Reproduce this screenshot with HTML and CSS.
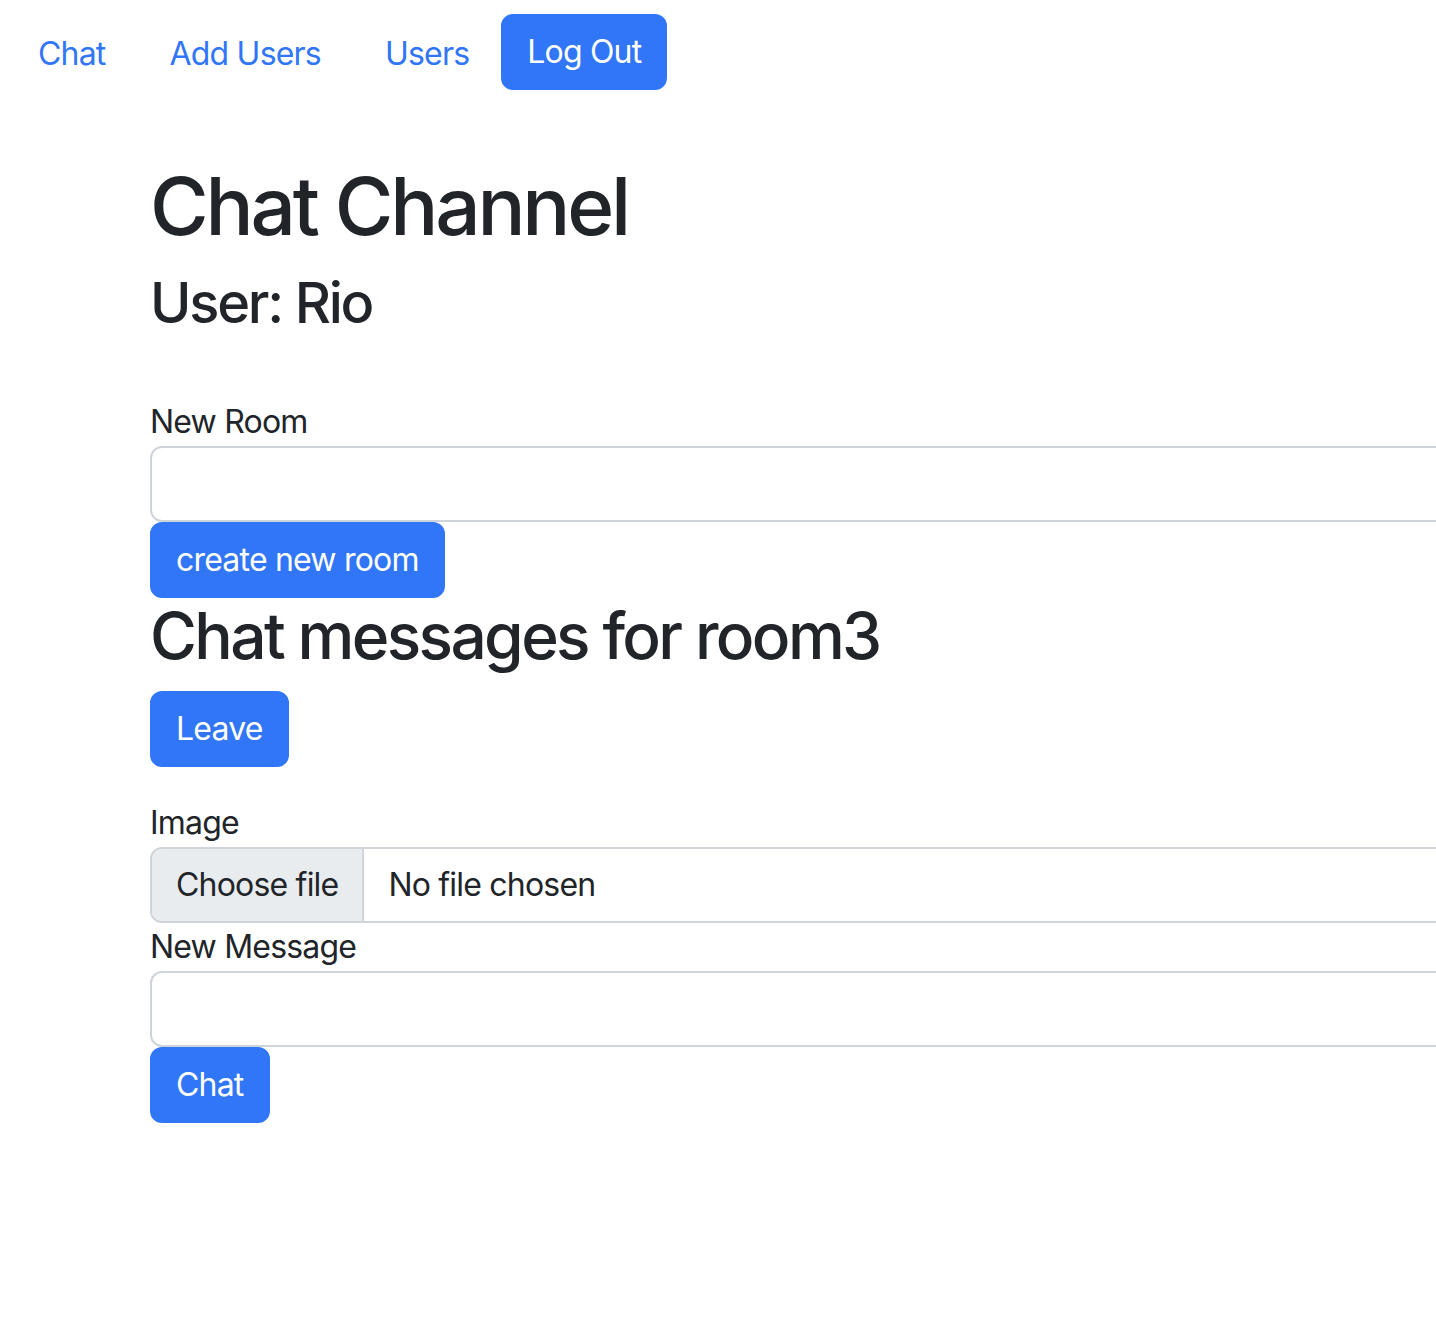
FILE: index.html
```html
<!DOCTYPE html>
<html lang="en">
<head>
<meta charset="utf-8">
<title>Chat Channel</title>
<link rel="stylesheet" href="styles.css">
</head>
<body>
<nav class="topnav">
  <ul class="nav-list">
    <li><a class="nav-link" href="#">Chat</a></li>
    <li><a class="nav-link" href="#">Add Users</a></li>
    <li><a class="nav-link" href="#">Users</a></li>
    <li><button class="btn btn-primary" type="button">Log Out</button></li>
  </ul>
</nav>
<main class="container">
  <h1 class="title">Chat Channel</h1>
  <h3 class="subtitle">User: Rio</h3>
  <form class="room-form">
    <label class="form-label" for="room">New Room</label>
    <input class="form-control" id="room" type="text">
    <button class="btn btn-primary" type="button">create new room</button>
  </form>
  <h2 class="room-title">Chat messages for room3</h2>
  <button class="btn btn-primary" type="button">Leave</button>
  <form class="message-form">
    <label class="form-label" for="image">Image</label>
    <div class="file-control" id="image">
      <span class="file-button">Choose file</span>
      <span class="file-name">No file chosen</span>
    </div>
    <label class="form-label" for="msg">New Message</label>
    <input class="form-control" id="msg" type="text">
    <button class="btn btn-primary" type="button">Chat</button>
  </form>
</main>
</body>
</html>
```
FILE: styles.css
```css
html {
  overflow: hidden;
}
body {
  margin: 0;
  font-family: Inter, "Liberation Sans", sans-serif;
  font-size: 32px;
  line-height: 1.5;
  letter-spacing: -0.025em;
  color: #212529;
  background: #fff;
}
.topnav {
  padding: 14px 0 0 6px;
}
.nav-list {
  list-style: none;
  margin: 0;
  padding: 0;
  display: flex;
  align-items: flex-start;
}
.nav-link {
  display: block;
  padding: 16px 32px;
  color: #3076f6;
  text-decoration: none;
}
.btn {
  display: inline-block;
  font-family: inherit;
  font-size: 32px;
  line-height: 48px;
  letter-spacing: inherit;
  padding: 12px 24px;
  border: 2px solid transparent;
  border-radius: 12px;
  cursor: pointer;
}
.btn-primary {
  background: #3076f6;
  border-color: #3076f6;
  color: #fff;
}
.container {
  padding-left: 150px;
  width: 1500px;
}
.title {
  font-size: 80px;
  font-weight: 500;
  line-height: 1.2;
  letter-spacing: -0.04em;
  margin: 64px 0 16px;
}
.subtitle {
  font-size: 56px;
  font-weight: 500;
  line-height: 1.2;
  letter-spacing: -0.04em;
  margin: 0 0 16px;
}
.room-form {
  margin-top: 61px;
}
.form-label {
  display: block;
}
.form-control {
  display: block;
  box-sizing: border-box;
  width: 100%;
  height: 76px;
  padding: 12px 24px;
  font-family: inherit;
  font-size: 32px;
  border: 2px solid #ced4da;
  border-radius: 12px;
  background: #fff;
}
.room-title {
  font-size: 64px;
  font-weight: 500;
  line-height: 1.2;
  letter-spacing: -0.041em;
  margin: 0 0 16px;
}
.message-form {
  margin-top: 32px;
}
.file-control {
  display: flex;
  box-sizing: border-box;
  height: 76px;
  border: 2px solid #ced4da;
  border-radius: 12px;
  overflow: hidden;
  color: #212529;
}
.file-button {
  background: #e9ecef;
  padding: 12px 24px;
  border-right: 2px solid #ced4da;
}
.file-name {
  padding: 12px 24px;
}
```
